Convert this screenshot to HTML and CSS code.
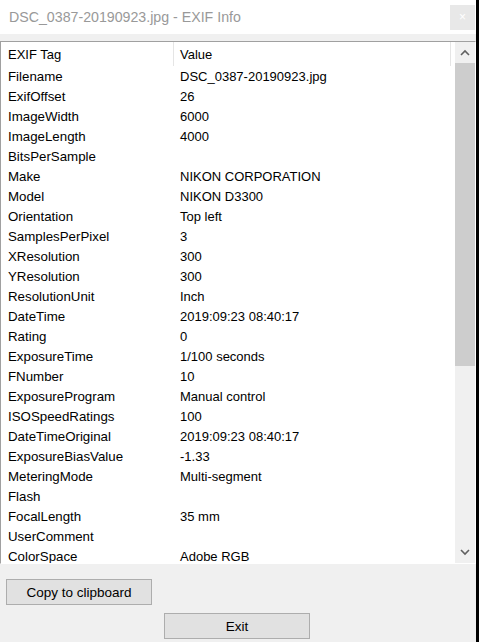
FILE: index.html
```html
<!DOCTYPE html>
<html>
<head>
<meta charset="utf-8">
<link rel="stylesheet" href="styles.css">
</head>
<body>
<div class="window">
  <div class="titlebar">
    <div class="title">DSC_0387-20190923.jpg - EXIF Info</div>
    <div class="close">×</div>
  </div>
  <div class="list">
    <div class="table">
      <div class="header">
        <div class="hcell tag">EXIF Tag</div>
        <div class="hsep"></div>
        <div class="hcell val">Value</div>
        <div class="hsep"></div>
      </div>
      <div class="rows">
        <div class="row"><span class="c1">Filename</span><span class="c2">DSC_0387-20190923.jpg</span></div>
        <div class="row"><span class="c1">ExifOffset</span><span class="c2">26</span></div>
        <div class="row"><span class="c1">ImageWidth</span><span class="c2">6000</span></div>
        <div class="row"><span class="c1">ImageLength</span><span class="c2">4000</span></div>
        <div class="row"><span class="c1">BitsPerSample</span><span class="c2"></span></div>
        <div class="row"><span class="c1">Make</span><span class="c2">NIKON CORPORATION</span></div>
        <div class="row"><span class="c1">Model</span><span class="c2">NIKON D3300</span></div>
        <div class="row"><span class="c1">Orientation</span><span class="c2">Top left</span></div>
        <div class="row"><span class="c1">SamplesPerPixel</span><span class="c2">3</span></div>
        <div class="row"><span class="c1">XResolution</span><span class="c2">300</span></div>
        <div class="row"><span class="c1">YResolution</span><span class="c2">300</span></div>
        <div class="row"><span class="c1">ResolutionUnit</span><span class="c2">Inch</span></div>
        <div class="row"><span class="c1">DateTime</span><span class="c2">2019:09:23 08:40:17</span></div>
        <div class="row"><span class="c1">Rating</span><span class="c2">0</span></div>
        <div class="row"><span class="c1">ExposureTime</span><span class="c2">1/100 seconds</span></div>
        <div class="row"><span class="c1">FNumber</span><span class="c2">10</span></div>
        <div class="row"><span class="c1">ExposureProgram</span><span class="c2">Manual control</span></div>
        <div class="row"><span class="c1">ISOSpeedRatings</span><span class="c2">100</span></div>
        <div class="row"><span class="c1">DateTimeOriginal</span><span class="c2">2019:09:23 08:40:17</span></div>
        <div class="row"><span class="c1">ExposureBiasValue</span><span class="c2">-1.33</span></div>
        <div class="row"><span class="c1">MeteringMode</span><span class="c2">Multi-segment</span></div>
        <div class="row"><span class="c1">Flash</span><span class="c2"></span></div>
        <div class="row"><span class="c1">FocalLength</span><span class="c2">35 mm</span></div>
        <div class="row"><span class="c1">UserComment</span><span class="c2"></span></div>
        <div class="row"><span class="c1">ColorSpace</span><span class="c2">Adobe RGB</span></div>
      </div>
    </div>
    <div class="scrollbar">
      <div class="sbtn">
        <svg width="10" height="7" viewBox="0 0 10 7"><path d="M1 6 L5 2 L9 6" fill="none" stroke="#606060" stroke-width="1.6"/></svg>
      </div>
      <div class="thumb"></div>
      <div class="track"></div>
      <div class="sbtn">
        <svg width="10" height="7" viewBox="0 0 10 7"><path d="M1 1 L5 5 L9 1" fill="none" stroke="#606060" stroke-width="1.6"/></svg>
      </div>
    </div>
  </div>
  <div class="bottom">
    <div class="btn copy">Copy to clipboard</div>
    <div class="btn exit">Exit</div>
  </div>
</div>
</body>
</html>
```

FILE: styles.css
```css
html, body {
  margin: 0;
  padding: 0;
}
body {
  width: 479px;
  height: 642px;
  overflow: hidden;
  background: #000;
}
.window {
  width: 476px;
  height: 642px;
  background: #f0f0f0;
  display: flex;
  flex-direction: column;
  font-family: "Liberation Sans", Arial, sans-serif;
  font-size: 13px;
  color: #000;
}
.titlebar {
  height: 34px;
  background: #fff;
  display: flex;
  align-items: flex-start;
  justify-content: space-between;
  flex-shrink: 0;
}
.title {
  font-family: "Liberation Sans", Arial, sans-serif;
  font-size: 14.2px;
  color: #999;
  padding-left: 9px;
  line-height: 34px;
}
.close {
  width: 25px;
  height: 25px;
  margin-top: 5px;
  margin-right: 1px;
  background: #e8e8e8;
  color: #fff;
  font-size: 12px;
  line-height: 25px;
  text-align: center;
}
.list {
  margin-top: 7px;
  height: 521px;
  border-top: 1px solid #a0a0a0;
  border-left: 1px solid #a0a0a0;
  border-right: 1px solid #fff;
  border-bottom: 1px solid #fff;
  background: #fff;
  display: flex;
  flex-shrink: 0;
}
.table {
  flex: 1;
  overflow: hidden;
}
.header {
  height: 24px;
  display: flex;
  align-items: stretch;
}
.hcell {
  line-height: 25px;
}
.hcell.tag {
  width: 165px;
  padding-left: 7px;
}
.hcell.val {
  width: 270px;
  padding-left: 6px;
}
.hsep {
  width: 1px;
  background: #e5e5e5;
}
.row {
  height: 20px;
  line-height: 21px;
  display: flex;
  white-space: nowrap;
  font-size: 13.3px;
}
.c1 {
  width: 166px;
  padding-left: 7px;
}
.c2 {
  padding-left: 6px;
  font-size: 13px;
}
.scrollbar {
  width: 20px;
  background: #f0f0f0;
  display: flex;
  flex-direction: column;
}
.sbtn {
  height: 21px;
  display: flex;
  align-items: center;
  justify-content: center;
}
.thumb {
  height: 303px;
  background: #cdcdcd;
}
.track {
  flex: 1;
}
.bottom {
  flex: 1;
  display: flex;
  flex-direction: column;
  align-items: flex-start;
}
.btn {
  width: 144px;
  height: 24px;
  border: 1px solid #adadad;
  background: #e1e1e1;
  text-align: center;
  line-height: 25px;
  font-size: 13.5px;
}
.copy {
  margin-top: 15px;
  margin-left: 6px;
}
.exit {
  margin-top: 8px;
  margin-left: 164px;
}
```
